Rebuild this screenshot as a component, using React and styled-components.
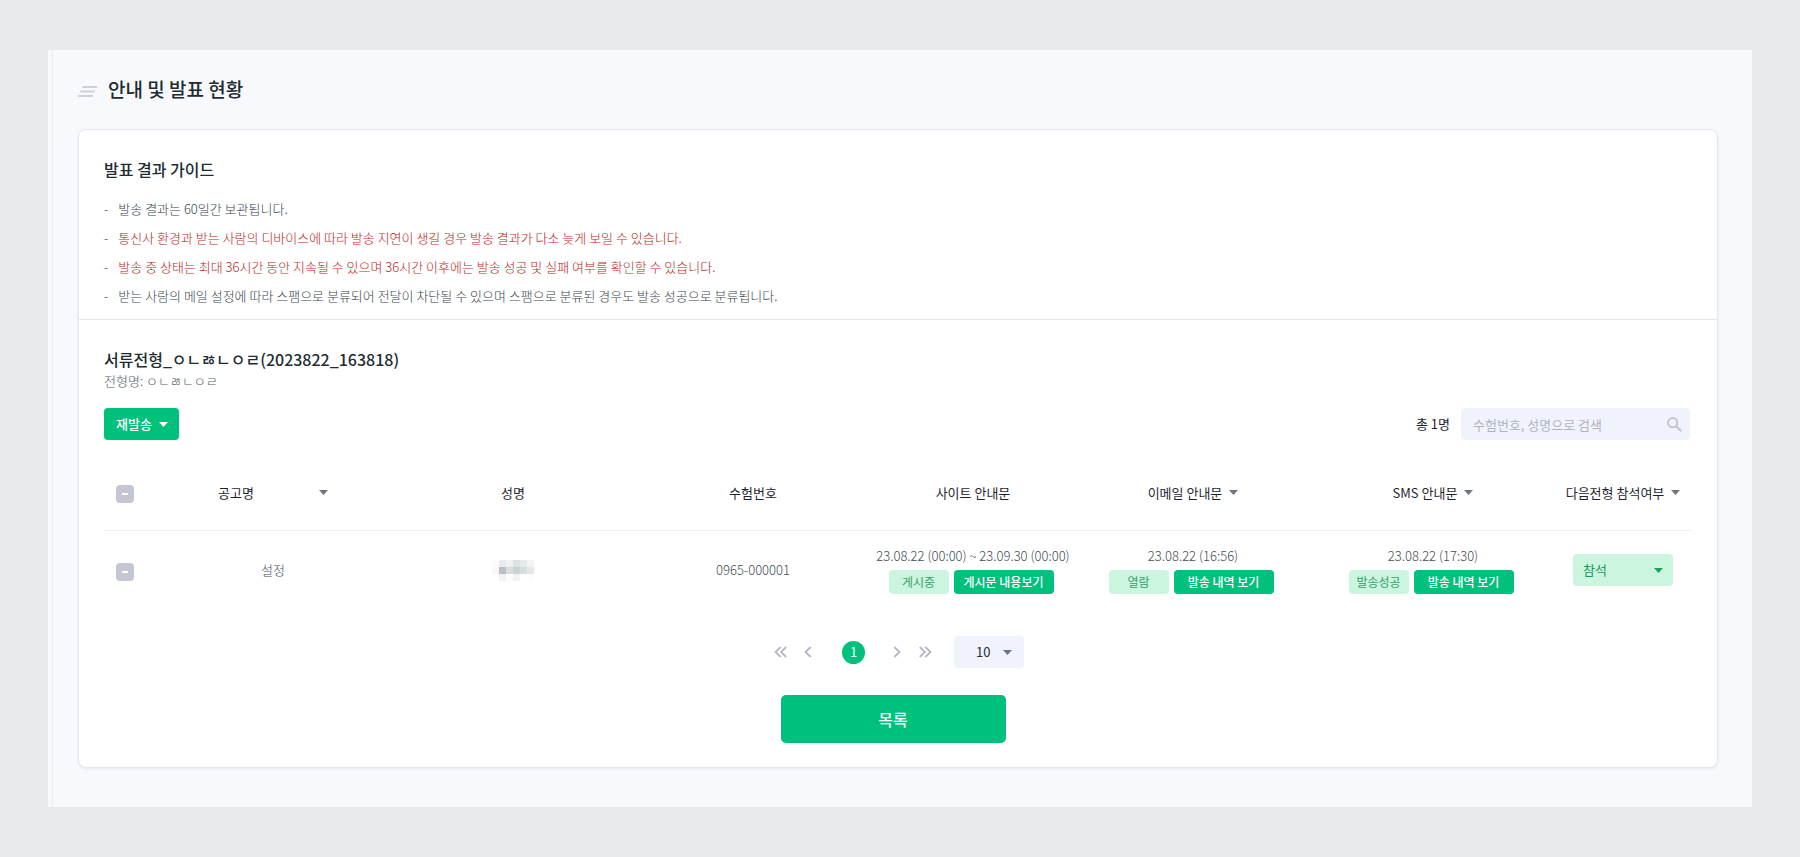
import { useState } from 'react';
import styled, { createGlobalStyle } from 'styled-components';

const GlobalStyle = createGlobalStyle`
  * {
    box-sizing: border-box;
  }
  body {
    margin: 0;
    background: #e8ebee;
    color: #212529;
    font-family: 'Noto Sans CJK KR', 'Noto Sans', sans-serif;
    font-size: 13px;
    line-height: 20px;
  }
  button, input, select {
    font: inherit;
    color: inherit;
  }
  h1, h2, p, ul {
    margin: 0;
    padding: 0;
  }
`;

const Page = styled.div`
  padding: 50px 48px;
`;

const Frame = styled.main`
  padding-left: 4px;
  background: #f8f9fd;
`;

const Content = styled.div`
  padding: 23px 34px 39px 25px;
  border-left: 1px solid #ebedf2;
`;

const TitleBar = styled.header`
  display: flex;
  align-items: center;
  gap: 11px;
  height: 32px;
  margin-bottom: 24px;
  > svg {
    margin-top: 4px;
  }
`;

const Title = styled.h1`
  font-size: 19px;
  font-weight: 500;
  color: #202c32;
`;

const Card = styled.div`
  background: #fff;
  border: 1px solid #e6e8ee;
  border-radius: 8px;
  box-shadow: 0 1px 3px rgba(60, 70, 100, 0.1);
`;

const Guide = styled.section`
  padding: 27px 25px 9px;
  border-bottom: 1px solid #e6e8ea;
`;

const SubTitle = styled.h2`
  font-size: 16px;
  font-weight: 500;
  line-height: 24px;
  color: #202c32;
`;

const GuideList = styled.ul`
  margin-top: 13px;
  list-style: none;
`;

const GuideItem = styled.li`
  display: flex;
  gap: 10px;
  font-weight: 300;
  line-height: 29px;
  color: ${({ $warn }) => ($warn ? '#c01c1b' : '#37474f')};
`;

const Result = styled.section`
  padding: 27px 25px 24px;
`;

const StepName = styled.p`
  font-weight: 300;
  color: #4f5e64;
`;

const Toolbar = styled.div`
  display: flex;
  justify-content: space-between;
  align-items: center;
  margin-top: 17px;
  padding-right: 2px;
`;

const ResendButton = styled.button`
  display: flex;
  align-items: center;
  gap: 7px;
  height: 32px;
  padding: 0 11px 0 12px;
  border: none;
  border-radius: 4px;
  background: #00c17c;
  color: #fff;
  font-weight: 500;
  cursor: pointer;
`;

const SearchArea = styled.div`
  display: flex;
  align-items: center;
  gap: 11px;
  color: #1f1f2e;
`;

const Stack = styled.div`
  display: inline-grid;
  align-items: center;
  width: ${({ $width }) => $width}px;
  vertical-align: middle;
  > * {
    grid-area: 1 / 1;
  }
  > svg {
    justify-self: end;
    margin-right: ${({ $inset }) => $inset}px;
    pointer-events: none;
  }
`;

const SearchInput = styled.input`
  width: 100%;
  height: 32px;
  padding: 0 36px 0 12px;
  border: none;
  border-radius: 4px;
  background: #f0f3fb;
  &::placeholder {
    color: #b0b4bf;
    opacity: 1;
  }
`;

const Table = styled.table`
  width: 100%;
  margin-top: 16px;
  table-layout: fixed;
  border-collapse: collapse;
  text-align: center;
`;

const Th = styled.th`
  height: 74px;
  padding: 0;
  border-bottom: 1px solid #f0f1f3;
  font-weight: 400;
  color: #1f1f2e;
`;

const Td = styled.td`
  height: 82px;
  padding: 0 0 ${({ $check }) => ($check ? 0 : 2)}px;
  font-weight: 300;
  color: #3f4e55;
  white-space: nowrap;
`;

const SortButton = styled.button`
  display: inline-flex;
  align-items: center;
  gap: ${({ $wide }) => ($wide ? 65 : 7)}px;
  padding: 0;
  border: none;
  background: none;
  cursor: pointer;
`;

const CheckBox = styled.input`
  appearance: none;
  display: inline-grid;
  place-items: center;
  width: 18px;
  height: 18px;
  margin: 0 0 0 -7px;
  border-radius: 4px;
  background: #c4c6d2;
  vertical-align: middle;
  &::before {
    content: '';
    width: 6px;
    height: 2px;
    background: #fff;
  }
`;

const Actions = styled.div`
  display: flex;
  justify-content: center;
  gap: 5px;
  margin-top: 4px;
  padding-right: 4px;
  font-size: 12px;
`;

const Status = styled.span`
  width: 60px;
  border-radius: 4px;
  background: #ccf5df;
  color: #35a169;
  font-weight: 400;
  line-height: 24px;
`;

const ViewButton = styled.button`
  width: 100px;
  height: 24px;
  padding: 0;
  border: none;
  border-radius: 4px;
  background: #00c17c;
  color: #fff;
  font-weight: 500;
  cursor: pointer;
`;

const Select = styled.select`
  appearance: none;
  width: 100%;
  height: 32px;
  padding: 0 ${({ $attend }) => ($attend ? 10 : 22)}px;
  border: none;
  border-radius: 4px;
  background: ${({ $attend }) => ($attend ? '#ccf5df' : '#f0f3fb')};
  color: ${({ $attend }) => ($attend ? '#14995a' : '#2b2b3a')};
  font-weight: 400;
`;

const Footer = styled.footer`
  margin-top: 24px;
  padding-right: 10px;
`;

const Pagination = styled.nav`
  display: flex;
  justify-content: center;
  align-items: center;
  padding-left: 4px;
`;

const PageArrow = styled.button`
  display: flex;
  justify-content: center;
  align-items: center;
  width: 28px;
  height: 24px;
  padding: 0;
  border: none;
  background: none;
  cursor: pointer;
`;

const PageNumber = styled.button`
  width: 23px;
  height: 23px;
  margin: 0 18px 0 20px;
  padding: 0;
  border: none;
  border-radius: 50%;
  background: #00c17c;
  color: #fff;
  cursor: pointer;
`;

const PageSize = styled.div`
  display: flex;
  margin-left: 15px;
`;

const ListButton = styled.button`
  display: block;
  width: 225px;
  height: 48px;
  margin: 27px auto 0;
  padding: 0;
  border: none;
  border-radius: 5px;
  background: #00c17c;
  color: #fff;
  font-size: 16px;
  font-weight: 500;
  cursor: pointer;
`;

const Caret = ({ color = '#70747f' }) => (
  <svg width="9" height="5" viewBox="0 0 9 5" aria-hidden="true">
    <path d="M0 0h9L4.5 5z" fill={color} />
  </svg>
);

const TitleIcon = () => (
  <svg width="19" height="11" viewBox="0 0 19 11" stroke="#cdd0d6" strokeWidth="2" aria-hidden="true">
    <path d="M4.5 1H19M2.3 5.5H17M0 10h15" />
  </svg>
);

const SearchIcon = () => (
  <svg width="15" height="15" viewBox="0 0 15 15" fill="none" stroke="#c3c5cf" strokeWidth="2" aria-hidden="true">
    <circle cx="5.7" cy="5.7" r="4.6" />
    <path d="M9 9l5.2 5.2" />
  </svg>
);

const Chevron = ({ double, right }) => (
  <svg width={double ? 13 : 8} height="12" viewBox={double ? '0 0 13 12' : '0 0 8 12'} fill="none" stroke="#b5b8c0" strokeWidth="1.8" aria-hidden="true">
    <g transform={right ? `translate(${double ? 13 : 8} 0) scale(-1 1)` : undefined}>
      <path d="M6.7 1L1.5 6l5.2 5" />
      {double && <path d="M12.2 1L7 6l5.2 5" />}
    </g>
  </svg>
);

const maskRows = [
  ['#fefcfa', '#e6ecef', '#eff1f1', '#dde2e5', '#e5e9eb', '#f2f3f4'],
  ['#fbf7f5', '#b8c0c5', '#d8dddf', '#cbd2d6', '#d7dcdf', '#e5e8ea'],
  ['#ffffff', '#f1f3f4', '#fdfdfd', '#f0f2f3', '#ffffff', '#fcfcfc'],
];

const MaskBlock = styled.svg`
  display: block;
  margin: 0 auto;
`;

const MaskedName = () => (
  <MaskBlock width="42" height="21" viewBox="0 0 42 21" role="img" aria-label="성명 비공개" shapeRendering="crispEdges">
    {maskRows.map((row, y) =>
      row.map((fill, x) => (
        <rect key={`${x}-${y}`} x={x * 7} y={y * 7} width="7" height="7" fill={fill} />
      ))
    )}
  </MaskBlock>
);

const guides = [
  { text: '발송 결과는 60일간 보관됩니다.' },
  {
    text: '통신사 환경과 받는 사람의 디바이스에 따라 발송 지연이 생길 경우 발송 결과가 다소 늦게 보일 수 있습니다.',
    warn: true,
  },
  {
    text: '발송 중 상태는 최대 36시간 동안 지속될 수 있으며 36시간 이후에는 발송 성공 및 실패 여부를 확인할 수 있습니다.',
    warn: true,
  },
  {
    text: '받는 사람의 메일 설정에 따라 스팸으로 분류되어 전달이 차단될 수 있으며 스팸으로 분류된 경우도 발송 성공으로 분류됩니다.',
  },
];

const columns = [
  { label: '공고명', width: 240, sort: true, wide: true },
  { label: '성명', width: 240 },
  { label: '수험번호', width: 240 },
  { label: '사이트 안내문', width: 200 },
  { label: '이메일 안내문', width: 240, sort: true },
  { label: 'SMS 안내문', width: 240, sort: true },
  { label: '다음전형 참석여부', width: 140, sort: true },
];

const Notice = ({ date, status, action }) => (
  <Td>
    <div>{date}</div>
    <Actions>
      <Status>{status}</Status>
      <ViewButton type="button">{action}</ViewButton>
    </Actions>
  </Td>
);

const App = () => {
  const [keyword, setKeyword] = useState('');
  const [attend, setAttend] = useState('참석');
  const [pageSize, setPageSize] = useState('10');

  return (
    <>
      <GlobalStyle />
      <Page>
        <Frame>
          <Content>
            <TitleBar>
              <TitleIcon />
              <Title>안내 및 발표 현황</Title>
            </TitleBar>
            <Card>
              <Guide>
                <SubTitle>발표 결과 가이드</SubTitle>
                <GuideList>
                  {guides.map(({ text, warn }) => (
                    <GuideItem key={text} $warn={warn}>
                      <span>-</span>
                      <span>{text}</span>
                    </GuideItem>
                  ))}
                </GuideList>
              </Guide>
              <Result>
                <SubTitle>서류전형_ㅇㄴㅀㄴㅇㄹ(2023822_163818)</SubTitle>
                <StepName>전형명: ㅇㄴㅀㄴㅇㄹ</StepName>
                <Toolbar>
                  <ResendButton type="button">
                    재발송
                    <Caret color="#fff" />
                  </ResendButton>
                  <SearchArea>
                    <span>총 1명</span>
                    <Stack $width={229} $inset={8}>
                      <SearchInput
                        type="text"
                        aria-label="검색"
                        placeholder="수험번호, 성명으로 검색"
                        value={keyword}
                        onChange={(e) => setKeyword(e.target.value)}
                      />
                      <SearchIcon />
                    </Stack>
                  </SearchArea>
                </Toolbar>
                <Table>
                  <colgroup>
                    <col width="49" />
                    {columns.map(({ label, width }) => (
                      <col key={label} width={width} />
                    ))}
                  </colgroup>
                  <thead>
                    <tr>
                      <Th scope="col">
                        <CheckBox type="checkbox" aria-label="전체 선택" />
                      </Th>
                      {columns.map(({ label, sort, wide }) => (
                        <Th key={label} scope="col">
                          {sort ? (
                            <SortButton type="button" $wide={wide}>
                              {label}
                              <Caret />
                            </SortButton>
                          ) : (
                            label
                          )}
                        </Th>
                      ))}
                    </tr>
                  </thead>
                  <tbody>
                    <tr>
                      <Td $check>
                        <CheckBox type="checkbox" aria-label="설정 선택" />
                      </Td>
                      <Td>설정</Td>
                      <Td>
                        <MaskedName />
                      </Td>
                      <Td>0965-000001</Td>
                      <Notice
                        date="23.08.22 (00:00) ~ 23.09.30 (00:00)"
                        status="게시중"
                        action="게시문 내용보기"
                      />
                      <Notice date="23.08.22 (16:56)" status="열람" action="발송 내역 보기" />
                      <Notice date="23.08.22 (17:30)" status="발송성공" action="발송 내역 보기" />
                      <Td>
                        <Stack $width={100} $inset={10}>
                          <Select
                            $attend
                            aria-label="다음전형 참석여부"
                            value={attend}
                            onChange={(e) => setAttend(e.target.value)}
                          >
                            <option>참석</option>
                            <option>불참</option>
                          </Select>
                          <Caret color="#14a45c" />
                        </Stack>
                      </Td>
                    </tr>
                  </tbody>
                </Table>
                <Footer>
                  <Pagination aria-label="페이지">
                    <PageArrow type="button" aria-label="처음">
                      <Chevron double />
                    </PageArrow>
                    <PageArrow type="button" aria-label="이전">
                      <Chevron />
                    </PageArrow>
                    <PageNumber type="button">1</PageNumber>
                    <PageArrow type="button" aria-label="다음">
                      <Chevron right />
                    </PageArrow>
                    <PageArrow type="button" aria-label="마지막">
                      <Chevron double right />
                    </PageArrow>
                    <PageSize>
                      <Stack $width={70} $inset={12}>
                        <Select
                          aria-label="페이지당 개수"
                          value={pageSize}
                          onChange={(e) => setPageSize(e.target.value)}
                        >
                          <option>10</option>
                          <option>20</option>
                          <option>50</option>
                        </Select>
                        <Caret />
                      </Stack>
                    </PageSize>
                  </Pagination>
                  <ListButton type="button">목록</ListButton>
                </Footer>
              </Result>
            </Card>
          </Content>
        </Frame>
      </Page>
    </>
  );
};

export default App;
